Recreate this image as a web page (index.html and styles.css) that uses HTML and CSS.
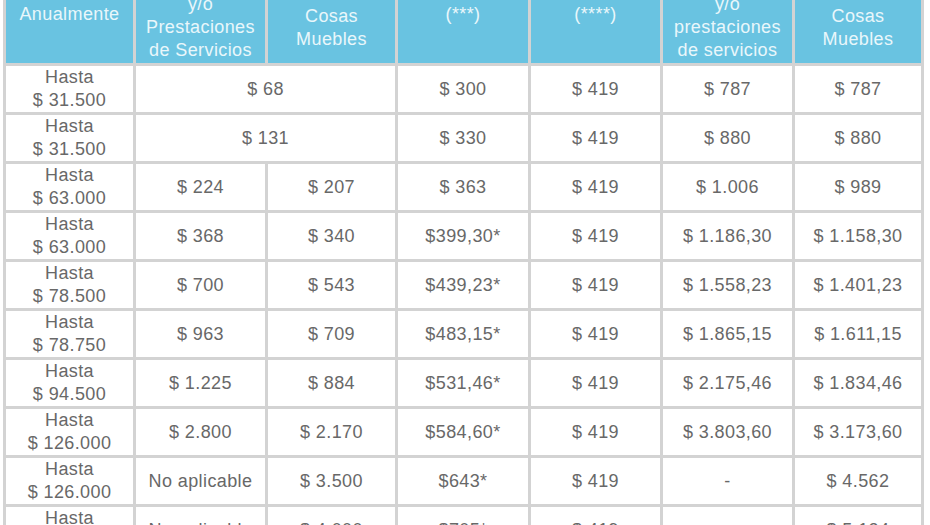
FILE: index.html
```html
<!DOCTYPE html>
<html lang="es">
<head>
<meta charset="utf-8">
<title>Monotributo</title>
<link rel="stylesheet" href="styles.css">
</head>
<body>
<table class="grid">
  <colgroup>
    <col class="c1"><col class="c2"><col class="c3"><col class="c4"><col class="c5"><col class="c6"><col class="c7">
  </colgroup>
  <thead>
    <tr>
      <th class="pb-lg">Ingresos Brutos<br>Anualmente</th>
      <th class="pb-sm">Locaciones<br>y/o<br>Prestaciones<br>de Servicios</th>
      <th class="pb-md">Cosas<br>Muebles</th>
      <th class="pb-lg">(***)</th>
      <th class="pb-lg">(****)</th>
      <th class="pb-sm">Locaciones<br>y/o<br>prestaciones<br>de servicios</th>
      <th class="pb-md">Cosas<br>Muebles</th>
    </tr>
  </thead>
  <tbody>
    <tr><td>Hasta<br>$ 31.500</td><td colspan="2">$ 68</td><td>$ 300</td><td>$ 419</td><td>$ 787</td><td>$ 787</td></tr>
    <tr><td>Hasta<br>$ 31.500</td><td colspan="2">$ 131</td><td>$ 330</td><td>$ 419</td><td>$ 880</td><td>$ 880</td></tr>
    <tr><td>Hasta<br>$ 63.000</td><td>$ 224</td><td>$ 207</td><td>$ 363</td><td>$ 419</td><td>$ 1.006</td><td>$ 989</td></tr>
    <tr><td>Hasta<br>$ 63.000</td><td>$ 368</td><td>$ 340</td><td>$399,30*</td><td>$ 419</td><td>$ 1.186,30</td><td>$ 1.158,30</td></tr>
    <tr><td>Hasta<br>$ 78.500</td><td>$ 700</td><td>$ 543</td><td>$439,23*</td><td>$ 419</td><td>$ 1.558,23</td><td>$ 1.401,23</td></tr>
    <tr><td>Hasta<br>$ 78.750</td><td>$ 963</td><td>$ 709</td><td>$483,15*</td><td>$ 419</td><td>$ 1.865,15</td><td>$ 1.611,15</td></tr>
    <tr><td>Hasta<br>$ 94.500</td><td>$ 1.225</td><td>$ 884</td><td>$531,46*</td><td>$ 419</td><td>$ 2.175,46</td><td>$ 1.834,46</td></tr>
    <tr><td>Hasta<br>$ 126.000</td><td>$ 2.800</td><td>$ 2.170</td><td>$584,60*</td><td>$ 419</td><td>$ 3.803,60</td><td>$ 3.173,60</td></tr>
    <tr><td>Hasta<br>$ 126.000</td><td>No aplicable</td><td>$ 3.500</td><td>$643*</td><td>$ 419</td><td>-</td><td>$ 4.562</td></tr>
    <tr><td>Hasta<br>$ 126.000</td><td>No aplicable</td><td>$ 4.000</td><td>$705*</td><td>$ 419</td><td>-</td><td>$ 5.124</td></tr>
  </tbody>
</table>
</body>
</html>
```

FILE: styles.css
```css
html, body {
  margin: 0;
  padding: 0;
  background: #ffffff;
  overflow: hidden;
}

.grid {
  table-layout: fixed;
  width: 921px;
  margin: -60px 0 0 3px;
  border-collapse: separate;
  border-spacing: 3px;
  background: #d3d3d3;
  font-family: "Liberation Sans", Arial, sans-serif;
  font-size: 18px;
  letter-spacing: 0.4px;
  line-height: 23px;
  color: #686868;
}

.c1 { width: 127px; }
.c2 { width: 129px; }
.c3 { width: 127px; }
.c4 { width: 130px; }
.c5 { width: 129px; }
.c6 { width: 129px; }
.c7 { width: 126px; }

.grid th {
  height: 120px;
  padding: 0;
  background: #69c3e1;
  color: #e9f7fb;
  font-weight: normal;
  text-align: center;
  vertical-align: bottom;
  box-sizing: border-box;
}

.grid th.pb-lg { padding-bottom: 37px; }
.grid th.pb-md { padding-bottom: 12px; }
.grid th.pb-sm { padding-bottom: 1px; }

.grid td {
  height: 46px;
  padding: 0;
  background: #ffffff;
  text-align: center;
  vertical-align: middle;
  box-sizing: border-box;
}
```
